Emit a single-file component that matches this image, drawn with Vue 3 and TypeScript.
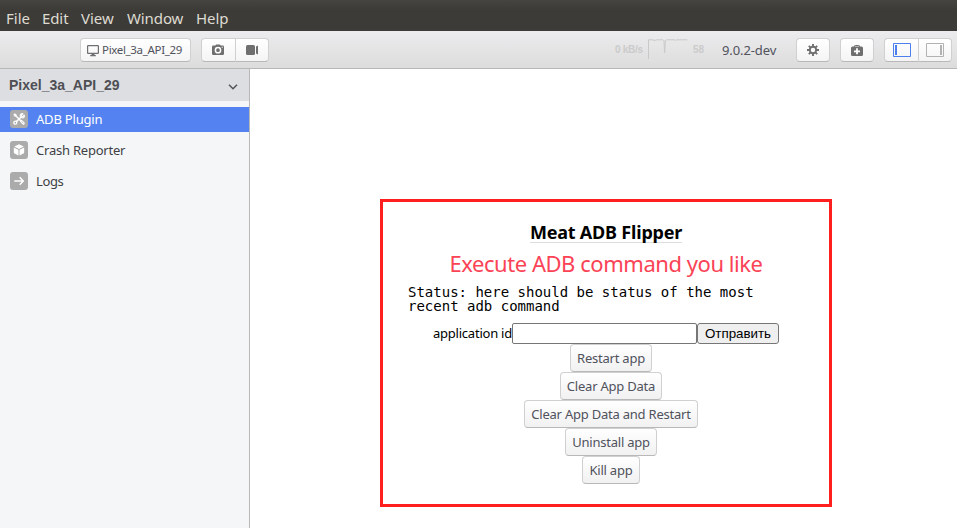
<script setup lang="ts">
import { ref } from 'vue'

interface Plugin {
  id: string
  label: string
}

const menu: string[] = ['File', 'Edit', 'View', 'Window', 'Help']
const plugins: Plugin[] = [
  { id: 'adb', label: 'ADB Plugin' },
  { id: 'crash', label: 'Crash Reporter' },
  { id: 'logs', label: 'Logs' },
]
const actions = [
  { id: 'restart', label: 'Restart app' },
  { id: 'clear', label: 'Clear App Data' },
  { id: 'clear-restart', label: 'Clear App Data and Restart' },
  { id: 'uninstall', label: 'Uninstall app' },
  { id: 'kill', label: 'Kill app' },
]
const selected = ref('adb')
const applicationId = ref('')
</script>

<template>
  <div class="window">
    <nav class="menubar">
      <span v-for="m in menu" :key="m" :class="['menu', 'menu-' + m.toLowerCase()]">{{ m }}</span>
    </nav>

    <header class="toolbar">
      <button class="tool device">
        <svg width="12" height="12" viewBox="0 0 12 12"><path d="M1.300.6h9.400q.7 0 .7.700v6.400q0 .7-.7.700H1.300q-.7 0-.7-.7V1.300q0-.7.700-.7z" fill="none" stroke="#6f6f73" stroke-width="1.200" /><path d="M4.500 8.500h3V10h1.300v1.200H3.200V10h1.300z" fill="#6f6f73" /></svg>
        <span class="device-name">Pixel_3a_API_29</span>
      </button>
      <div class="group capture">
        <button class="tool">
          <svg width="12" height="12" viewBox="0 0 12 12"><path d="M1.300 1.600h2L4.200.4h3.600l.9 1.200h2q1.300 0 1.300 1.300v6.800q0 1.300-1.300 1.300H1.300Q0 11 0 9.700V2.900q0-1.300 1.300-1.300z" fill="#6f6f6f" /><circle cx="6" cy="6.200" r="2.600" fill="none" stroke="#fff" stroke-width="1.500" /><circle cx="10.200" cy="3.200" r=".6" fill="#fff" /></svg>
        </button>
        <button class="tool">
          <svg width="12" height="10" viewBox="0 0 12 10"><rect width="9" height="10" rx="1.500" fill="#6f6f6f" /><path d="M10 1.500 12 .5v9l-2-1z" fill="#6f6f6f" /></svg>
        </button>
      </div>
      <div class="stats">
        <span class="rate">0 kB/s</span>
        <svg width="40" height="20" viewBox="0 0 40 20"><path d="M.5 20V.8H5l1 .7 3-.7h6l1 1 .6 12 .8-12 1-1h8l1 .7 1-.7h11" fill="none" stroke="#c9c9c9" /></svg>
        <span class="fps">58</span>
      </div>
      <span class="version">9.0.2-dev</span>
      <button class="tool settings">
        <svg width="12" height="12" viewBox="-6 -6 12 12"><circle r="3.200" fill="none" stroke="#6f6f6f" stroke-width="1.900" /><path d="M0-3.500V-6M0 3.500V6M-3.500 0H-6M3.500 0H6M-2.600-2.600-4.200-4.200M2.600-2.600 4.200-4.200M-2.600 2.600-4.200 4.200M2.600 2.600 4.200 4.200" stroke="#6f6f6f" stroke-width="1.900" /></svg>
      </button>
      <button class="tool support">
        <svg width="12" height="11" viewBox="0 0 12 11"><path d="M3.500 2V1.200Q3.500.5 4.200.5h3.600q.7 0 .7.700V2" fill="none" stroke="#6f6f6f" /><rect y="1.500" width="12" height="9.500" rx="1.500" fill="#6f6f6f" /><path d="M6 3.300v6M3 6.300h6" stroke="#fff" stroke-width="1.800" /></svg>
      </button>
      <div class="group panes">
        <button class="tool">
          <svg width="18" height="14" viewBox="0 0 18 14"><path d="M.5.5h17v13H.5z" fill="none" stroke="#4d80ee" /><path d="M2 2h2v10H2z" fill="#4d80ee" /></svg>
        </button>
        <button class="tool">
          <svg width="18" height="14" viewBox="0 0 18 14"><path d="M.5.5h17v13H.5z" fill="none" stroke="#b2b2b2" /><path d="M14 2h2v10h-2z" fill="#b2b2b2" /></svg>
        </button>
      </div>
    </header>

    <div class="body">
      <aside class="sidebar">
        <div class="app-name">
          <span>Pixel_3a_API_29</span>
          <svg width="10" height="6" viewBox="0 0 10 6"><path d="m1 .8 4 4 4-4" fill="none" stroke="#525357" stroke-width="1.500" /></svg>
        </div>
        <ul class="plugins">
          <li
            v-for="p in plugins"
            :key="p.id"
            :class="['plugin', 'plugin-' + p.id, { active: p.id === selected }]"
            @click="selected = p.id"
          >
            <span class="plugin-icon">
              <svg v-if="p.id === 'adb'" width="12" height="12" viewBox="0 0 12 12" fill="none" stroke="#fff"><path d="m3.500 3.500 5.400 5.400M8.100 4 3.400 8.600" stroke-width="1.500" /><path d="M.3 1.700 1.700.3l2.100 1.500v2H1.800z" fill="#fff" stroke="none" /><path d="M10.200.700 8.500 2.200l.1 1.200 1.200.1 1.500-1.700M10.200.700Q7 .3 7.200 3q.2 1.900 2.200 1.900 2.400 0 1.900-3.100" fill="none" stroke-width="1.100" /><circle cx="2.300" cy="9.700" r="1.500" stroke-width="1.300" /><path d="m7.600 7.700 1-.9 2.700 2.400q1 1.500-.1 2.300-1.100.6-2-.4L7 8.600z" fill="#fff" stroke="none" /><path d="m8.600 8.400 1.700 1.800" stroke="#ababab" stroke-width=".7" /></svg>
              <svg v-else-if="p.id === 'crash'" width="12" height="12" viewBox="0 0 12 12"><path d="m6 .3 4.800 2.300L6 5 1.200 2.600zM.8 3.400l4.700 2.400v5.800L1.600 9.600Q.8 9.200.8 8.300zM11.200 3.400 6.500 5.800v5.800l3.900-2q.8-.4.8-1.300z" fill="#fff" /></svg>
              <svg v-else width="12" height="12" viewBox="0 0 12 12"><path d="M1.300 6h8.900M6.700 2.300 10.300 6 6.700 9.700" fill="none" stroke="#fff" stroke-width="1.500" /></svg>
            </span>
            <span class="plugin-label">{{ p.label }}</span>
          </li>
        </ul>
      </aside>

      <main class="content">
        <section class="panel">
          <h1><span>Meat ADB Flipper</span></h1>
          <h2>Execute ADB command you like</h2>
          <pre class="status">Status: here should be status of the most
recent adb command</pre>
          <form class="send" @submit.prevent>
            <label for="app-id">application id</label>
            <input id="app-id" v-model="applicationId" type="text" />
            <button class="submit" type="submit">Отправить</button>
          </form>
          <div class="actions">
            <button v-for="a in actions" :key="a.id" :class="['action', 'action-' + a.id]">{{ a.label }}</button>
          </div>
        </section>
      </main>
    </div>
  </div>
</template>

<style>
body {
  margin: 0;
  overflow: hidden;
}
</style>

<style scoped>
* {
  box-sizing: border-box;
}
.window {
  display: flex;
  flex-direction: column;
  width: 957px;
  height: 528px;
  background: #fff;
  font-family: "Noto Sans", "Open Sans", sans-serif;
  font-size: 13px;
  white-space: nowrap;
}
svg {
  display: block;
  flex: none;
}
button {
  font-family: inherit;
  margin: 0;
}
.menubar {
  display: flex;
  flex: none;
  gap: 12px;
  height: 31px;
  padding: 7px 0 0 6px;
  background: linear-gradient(#45443f, #3c3b37 10px);
  color: #dfdbd2;
  font-size: 15px;
  line-height: 23px;
}
.menu-file { width: 24px; }
.menu-edit { width: 27px; letter-spacing: -0.1px; }
.menu-view { width: 34px; }
.menu-window { width: 57px; letter-spacing: -0.1px; }
.menu-help { width: 32px; letter-spacing: -0.1px; }
.toolbar {
  display: flex;
  flex: none;
  align-items: flex-start;
  height: 38px;
  padding: 7px 5px 0 80px;
  border-bottom: 1px solid #b8b8b8;
  background: linear-gradient(#ececee, #dcdcdc);
}
.tool {
  display: flex;
  align-items: center;
  justify-content: center;
  width: 34px;
  height: 24px;
  padding: 0;
  border: 1px solid #d0d0d1;
  border-bottom-color: #b8b8b9;
  border-radius: 4px;
  background: linear-gradient(#fff, #f4f4f5);
  color: #50525c;
}
.device {
  width: 111px;
  gap: 3px;
}
.device svg {
  margin-top: 2px;
}
.device-name {
  width: 82px;
  text-align: left;
  font-size: 11.5px;
  letter-spacing: -0.33px;
  line-height: 20px;
}
.group {
  display: flex;
}
.group .tool:first-child {
  border-radius: 4px 0 0 4px;
}
.group .tool:last-child {
  border-left: 0;
  border-radius: 0 4px 4px 0;
}
.capture {
  margin-left: 10px;
}
.capture .tool:first-child { width: 35px; padding-right: 2px; }
.capture .tool:last-child { width: 33px; }
.stats {
  display: flex;
  flex: none;
  margin-left: 346px;
  padding-top: 1px;
  color: #cbcbcb;
  font: bold 10px/22px "Liberation Sans", sans-serif;
}
.rate {
  width: 33px;
  letter-spacing: -0.3px;
}
.fps {
  width: 34px;
  padding-left: 5px;
}
.version {
  width: 74px;
  color: #50525c;
  letter-spacing: -0.1px;
  line-height: 24px;
}
.support {
  margin-left: 10px;
}
.panes {
  margin-left: auto;
}
.panes .tool:first-child { width: 35px; }
.panes .tool:last-child { width: 33px; }
.body {
  display: flex;
  flex: 1;
  min-height: 0;
}
.sidebar {
  flex: none;
  width: 250px;
  border-right: 1px solid #b8b8b8;
  background: #f5f6f8;
}
.app-name {
  display: flex;
  align-items: center;
  justify-content: space-between;
  height: 32px;
  padding: 1px 11px 0 9px;
  background: #dddee2;
  color: #4e4f54;
  font: bold 14px/31px "Liberation Sans", sans-serif;
}
.app-name svg {
  margin-top: 3px;
}
.plugins {
  display: flex;
  flex-direction: column;
  gap: 6px;
  margin: 0;
  padding: 6px 0 0;
  list-style: none;
}
.plugin {
  display: flex;
  align-items: center;
  gap: 8px;
  height: 25px;
  padding: 0 0 2px 10px;
  color: #404145;
}
.plugin.active {
  background: #5483f1;
  color: #fff;
}
.plugin-icon {
  display: grid;
  place-items: center;
  width: 18px;
  height: 18px;
  border-radius: 3px;
  background: #ababab;
}
.plugin-adb { letter-spacing: -0.2px; }
.plugin-crash { letter-spacing: -0.22px; }
.plugin-logs { letter-spacing: -0.35px; }
.content {
  flex: 1;
  padding: 130px 0 0 130px;
}
.panel {
  display: flex;
  flex-direction: column;
  align-items: center;
  width: 452px;
  height: 308px;
  padding: 21px 25px 0;
  border: 3px solid #ff1f1f;
  color: #000;
}
h1 {
  height: 20px;
  margin: 0;
  font-size: 18px;
  font-weight: 700;
  line-height: 19px;
}
h1 span {
  display: block;
  height: 20px;
  border-bottom: 1px solid #ddd;
  letter-spacing: -0.2px;
}
h2 {
  height: 42px;
  margin: 0;
  color: #fb4356;
  font-size: 22px;
  font-weight: 400;
  line-height: 40px;
  letter-spacing: -0.45px;
}
.status {
  align-self: stretch;
  height: 38px;
  margin: 0;
  font: 14px/14px "DejaVu Sans Mono", monospace;
}
.send {
  display: flex;
  flex: none;
  width: 346px;
  height: 21px;
}
.send label {
  width: 79px;
  line-height: 21px;
  letter-spacing: -0.23px;
}
.send input {
  width: 185px;
  height: 21px;
  padding: 1px 2px;
  border: 1px solid #767676;
  border-radius: 2px;
  background: #fff;
}
.submit {
  width: 82px;
  height: 21px;
  padding: 0;
  border: 1px solid #767676;
  border-radius: 3px;
  background: #efefef;
  color: #000;
  font: 13.333px "Liberation Sans", sans-serif;
}
.actions {
  display: flex;
  flex-direction: column;
  align-items: center;
  margin-left: 10px;
}
.action {
  height: 28px;
  padding: 0;
  border: 1px solid #d0d0d1;
  border-bottom-color: #b8b8b9;
  border-radius: 4px;
  background: linear-gradient(#fff, #f1f1f2);
  color: #50525c;
  font-size: 13px;
  line-height: 26px;
  letter-spacing: -0.22px;
}
.action-restart { width: 82px; }
.action-clear { width: 102px; }
.action-clear-restart { width: 174px; }
.action-uninstall { width: 92px; }
.action-kill { width: 58px; }
</style>
